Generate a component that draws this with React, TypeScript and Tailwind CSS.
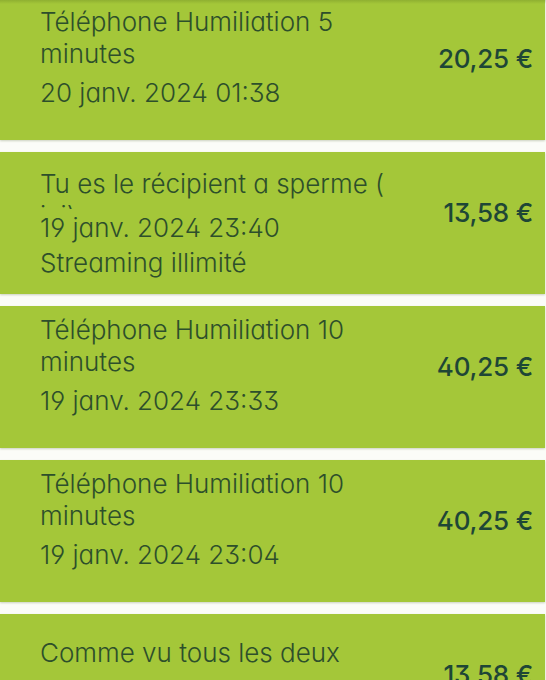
import React from "react";

/*
  Purchase history list: green cards with title, date,
  optional subtitle and the price on the right.
*/

type Purchase = {
  title: string;
  date: string;
  subtitle?: string;
  price: string;
  clamp?: boolean;
};

const purchases: Purchase[] = [
  {
    title: "Téléphone Humiliation 5 minutes",
    date: "20 janv. 2024 01:38",
    price: "20,25 €",
  },
  {
    title: "Tu es le récipient a sperme ( ici)",
    date: "19 janv. 2024 23:40",
    subtitle: "Streaming illimité",
    price: "13,58 €",
    clamp: true,
  },
  {
    title: "Téléphone Humiliation 10 minutes",
    date: "19 janv. 2024 23:33",
    price: "40,25 €",
  },
  {
    title: "Téléphone Humiliation 10 minutes",
    date: "19 janv. 2024 23:04",
    price: "40,25 €",
  },
  {
    title: "Comme vu tous les deux",
    date: "19 janv. 2024 22:51",
    subtitle: "Streaming illimité",
    price: "13,58 €",
  },
];

const font = "font-['Inter','Noto_Sans',sans-serif] [font-feature-settings:'cv11','ss01']";

const PurchaseCard: React.FC<{ p: Purchase; last?: boolean }> = ({ p, last }) => {
  return (
    <div className="flex h-[142px] mr-[1px] bg-[#a4c739] pl-[40px] pr-[12px] shadow-[0_1px_2px_rgba(60,80,20,0.25)]">
      {/* left: title / date / subtitle */}
      <div
        className={
          "flex flex-1 flex-col justify-center text-[26px] font-light leading-[32px] text-[#2d4f2b] " +
          (last ? "pt-[10px]" : "")
        }
      >
        <div
          className={
            p.clamp
              ? "max-w-[370px] max-h-[41px] overflow-hidden"
              : "max-w-[370px]"
          }
        >
          {p.title}
        </div>
        <div className={p.clamp ? "mt-[3px]" : "mt-[7px]"}>{p.date}</div>
        {p.subtitle ? (
          <div className="mt-[3px]">{p.subtitle}</div>
        ) : (
          <div className="h-[23px]" />
        )}
      </div>

      {/* right: price */}
      <div className="flex items-center pb-[22px] text-[26px] font-medium tracking-[-0.2px] text-[#1e4636]">
        {p.price}
      </div>
    </div>
  );
};

const App: React.FC = () => {
  return (
    <div className={`relative min-h-screen bg-[#fbfcf8] ${font}`}>
      {/* shadow under the (scrolled-off) header */}
      <div className="absolute left-0 right-0 top-0 z-10 h-[6px] bg-gradient-to-b from-[rgba(40,60,10,0.25)] to-transparent" />

      <div className="-mt-[2px] flex flex-col gap-[12px]">
        {purchases.map((p, i) => (
          <PurchaseCard key={i} p={p} last={i === purchases.length - 1} />
        ))}
      </div>
    </div>
  );
};

export default App;
